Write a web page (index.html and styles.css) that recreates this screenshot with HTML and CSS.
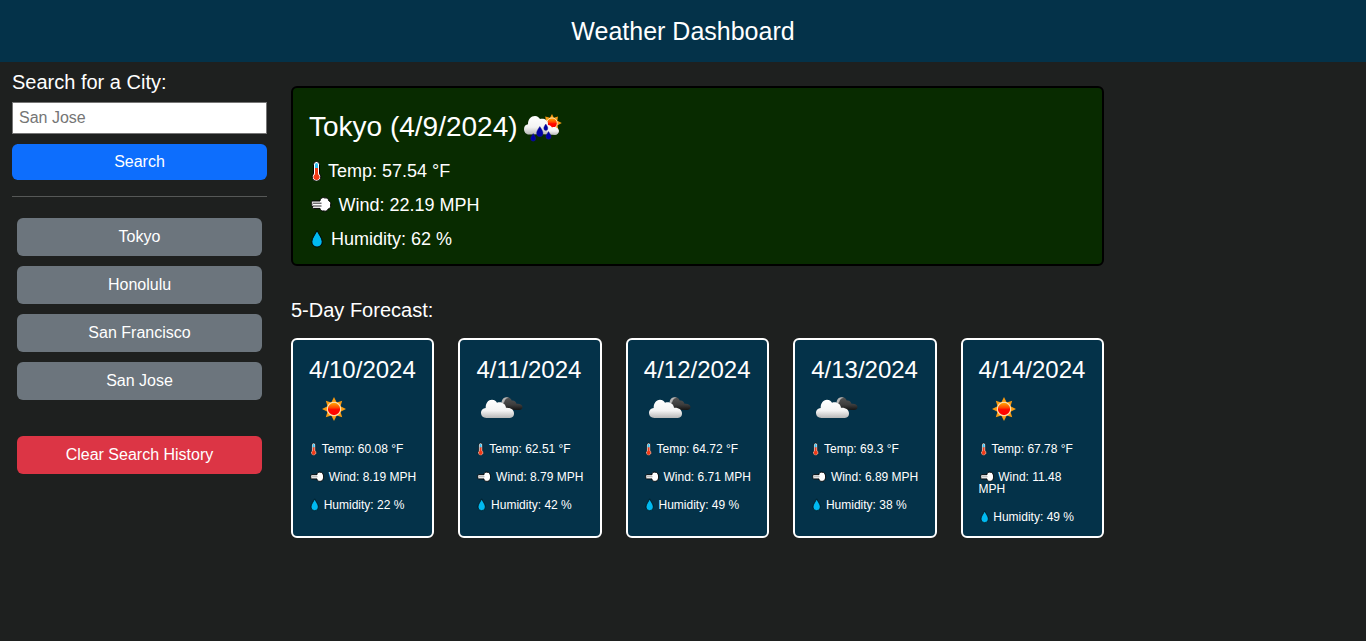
FILE: index.html
```html
<!DOCTYPE html>
<html lang="en">
<head>
<meta charset="utf-8">
<title>Weather Dashboard</title>
<link rel="stylesheet" href="styles.css">
</head>
<body>
<svg class="defs" aria-hidden="true">
  <defs>
    <linearGradient id="g-sun" x1="0" y1="0" x2="0" y2="1"><stop offset="0" stop-color="#ffb000"/><stop offset=".4" stop-color="#ff4a00"/><stop offset=".55" stop-color="#ff0800"/><stop offset="1" stop-color="#ff0000"/></linearGradient>
    <linearGradient id="g-cloud" x1="0" y1="0" x2="0" y2="1"><stop offset="0" stop-color="#ffffff"/><stop offset=".6" stop-color="#f3f3f3"/><stop offset="1" stop-color="#b8b8b8"/></linearGradient>
    <linearGradient id="g-dark" x1="0" y1="0" x2="0" y2="1"><stop offset="0" stop-color="#555"/><stop offset=".6" stop-color="#3c3c3c"/><stop offset="1" stop-color="#141414"/></linearGradient>
    <symbol id="sun" viewBox="0 0 24 24">
      <path d="M12 0l2.700 5.500 5.500-1.700-1.700 5.500L24 12l-5.500 2.700 1.700 5.500-5.500-1.700L12 24l-2.700-5.500-5.500 1.700 1.700-5.500L0 12l5.500-2.700-1.700-5.500 5.500 1.700z" fill="#f79a12"/>
      <circle cx="12" cy="12" r="6.700" fill="url(#g-sun)" stroke="#ffe3b2" stroke-width="1.1"/>
    </symbol>
    <symbol id="clouds" viewBox="0 0 42 22">
      <path d="M21 12.500V4.500C21.500 1.500 24 0 26.500.3c2.300.2 3.500 1.600 4.200 3.300 2.300-.6 4.300.7 4.800 3.200 3.500-.4 6 .9 6 3.200 0 2-1.500 3-3.500 3z" fill="url(#g-dark)"/>
      <path d="M20.500 6.500C20.500 3 22.500.2 25.500.2c1 0 1.800.3 2.400.8-2.400-.3-4.400 1.700-4.800 4.500z" fill="#b5b5b5"/>
      <path d="M5.500 21C2 21 0 18.800 0 15.800c0-2.500 2-4.700 4.700-4.800C4.500 6.500 7 2.800 11 2.800c2.200 0 4 1.200 5 3 4.500-1.500 8.500 1 9 5 5-.3 8 2.200 8 5.700S30.500 21 28 21z" fill="url(#g-cloud)"/>
    </symbol>
    <symbol id="rain" viewBox="0 0 38 28">
      <path d="M28 0l1.800 3.700 4.200-1.200-.7 4.300 4.500 2.200-4.200 2.300.6 4.200-4.500-1L28 18l-2-4-5 1 1-5-4-1 4-2-.8-4.500 4.800 1.200z" fill="#f79a12"/>
      <circle cx="28" cy="9.200" r="5.300" fill="url(#g-sun)" stroke="#ffe3b2"/>
      <path d="M17 20c2-6 3-9 7-9 2 0 3 1 4 2.500 3-1.500 7 .5 7 3.500 0 2-2 4-4 4z" fill="url(#g-cloud)"/>
      <path d="M5 20.500C2 20.500 0 18 0 15s2-4.600 4-4.800C4 5 7 2 11 2c2.500 0 4 1.500 5 3 4-1 8 1 8 5l-1 10z" fill="url(#g-cloud)"/>
      <g fill="#0000a6" stroke="#20207c" stroke-width=".4">
        <path d="M9.200 19.500c1.500 2.500 2.500 3.600 2.500 5a2.500 2.700 0 0 1-5 0c0-1.400 1-2.500 2.500-5z"/>
        <path d="M15.800 12.500c2 3 3.200 4.800 3.200 6.700a3.200 3.500 0 0 1-6.400 0c0-1.900 1.200-3.700 3.200-6.700z"/>
        <path d="M21.800 10c1.300 2 2 3 2 4.200a2 2.300 0 0 1-4 0c0-1.200.7-2.200 2-4.200z"/>
        <path d="M24.500 17.500c1.600 2.500 2.600 3.600 2.600 5a2.600 2.800 0 0 1-5.200 0c0-1.400 1-2.500 2.600-5z"/>
      </g>
    </symbol>
    <symbol id="temp" viewBox="0 0 16 20">
      <path d="M7.500.5a3 3 0 0 0-3 3v9.300a4.300 4.300 0 1 0 6 0V3.500a3 3 0 0 0-3-3z" fill="#fff" stroke="#000"/>
      <path d="M7.500 2A1.500 1.500 0 0 0 6 3.500V8h3V3.500A1.500 1.500 0 0 0 7.500 2z" fill="#32bdf0"/>
      <path d="M6 7h3v6.300a3.100 3.100 0 1 1-3 0z" fill="#f03a17"/>
    </symbol>
    <symbol id="wind" viewBox="0 0 24 20">
      <path d="M3.500 6H11C11 3.300 14 1.800 15.700 3c2-.6 3.800.8 4 2.700 1.800.8 2.500 2.600 1.900 4.300.4 2-.8 3.700-2.500 4.100-.8 1.900-2.600 2.600-4.200 1.800-2 .5-3.600-.8-3.900-2.500H4.500c-1.100 0-1.300-1.300-.6-1.900-1.300 0-1.700-1.200-1-2-.9-.6-.5-3.500.6-3.500z" fill="#fff" stroke="#000"/>
      <path d="M3.500 8.200h9M3.500 11h9" stroke="#111" stroke-width=".9"/>
    </symbol>
    <symbol id="wind-small" viewBox="0 0 17 14">
      <path d="M2.500 4.700H8C8 2.500 9.700 1.700 11 2.200c2-.3 3.800 1.900 3.600 4.900 0 3-2 4.700-4.100 4.200-1.500 0-2.500-1-2.500-2.400H2.500c-1 0-1-4.200 0-4.200z" fill="#fff" stroke="#000" stroke-width=".9"/>
      <path d="M3 6.700h5.500" stroke="#b8b8b8" stroke-width="1.300"/>
    </symbol>
    <symbol id="drop" viewBox="0 0 18 20">
      <path d="M8.500.8C7 4.800 3 8.800 3 13a5.500 5.500 0 0 0 11 0C14 8.800 10 4.800 8.500.8z" fill="#00b9f1" stroke="#000"/>
    </symbol>
  </defs>
</svg>

<header class="header"><h1>Weather Dashboard</h1></header>

<main class="layout">
  <aside class="sidebar">
    <label class="label" for="city">Search for a City:</label>
    <input class="input" id="city" type="text" placeholder="San Jose">
    <button class="btn btn-search">Search</button>
    <div class="history">
      <button class="btn">Tokyo</button>
      <button class="btn">Honolulu</button>
      <button class="btn">San Francisco</button>
      <button class="btn">San Jose</button>
      <button class="btn btn-clear">Clear Search History</button>
    </div>
  </aside>

  <div class="content">
    <section class="today">
      <h2>Tokyo (4/9/2024)<svg class="rain"><use href="#rain"/></svg></h2>
      <p><svg class="temp"><use href="#temp"/></svg>Temp: 57.54 °F</p>
      <p><svg class="wind"><use href="#wind"/></svg>Wind: 22.19 MPH</p>
      <p><svg class="drop"><use href="#drop"/></svg>Humidity: 62 %</p>
    </section>

    <h3 class="forecast-title">5-Day Forecast:</h3>
    <section class="forecast">
      <article class="day">
        <h4>4/10/2024</h4>
        <svg class="sun"><use href="#sun"/></svg>
        <p><svg class="temp"><use href="#temp"/></svg>Temp: 60.08 °F</p>
        <p><svg class="wind"><use href="#wind-small"/></svg>Wind: 8.19 MPH</p>
        <p><svg class="drop"><use href="#drop"/></svg>Humidity: 22 %</p>
      </article>
      <article class="day">
        <h4>4/11/2024</h4>
        <svg class="clouds"><use href="#clouds"/></svg>
        <p><svg class="temp"><use href="#temp"/></svg>Temp: 62.51 °F</p>
        <p><svg class="wind"><use href="#wind-small"/></svg>Wind: 8.79 MPH</p>
        <p><svg class="drop"><use href="#drop"/></svg>Humidity: 42 %</p>
      </article>
      <article class="day">
        <h4>4/12/2024</h4>
        <svg class="clouds"><use href="#clouds"/></svg>
        <p><svg class="temp"><use href="#temp"/></svg>Temp: 64.72 °F</p>
        <p><svg class="wind"><use href="#wind-small"/></svg>Wind: 6.71 MPH</p>
        <p><svg class="drop"><use href="#drop"/></svg>Humidity: 49 %</p>
      </article>
      <article class="day">
        <h4>4/13/2024</h4>
        <svg class="clouds"><use href="#clouds"/></svg>
        <p><svg class="temp"><use href="#temp"/></svg>Temp: 69.3 °F</p>
        <p><svg class="wind"><use href="#wind-small"/></svg>Wind: 6.89 MPH</p>
        <p><svg class="drop"><use href="#drop"/></svg>Humidity: 38 %</p>
      </article>
      <article class="day">
        <h4>4/14/2024</h4>
        <svg class="sun"><use href="#sun"/></svg>
        <p><svg class="temp"><use href="#temp"/></svg>Temp: 67.78 °F</p>
        <p><svg class="wind"><use href="#wind-small"/></svg>Wind: 11.48 MPH</p>
        <p><svg class="drop"><use href="#drop"/></svg>Humidity: 49 %</p>
      </article>
    </section>
  </div>
</main>
</body>
</html>
```
FILE: styles.css
```css
* { box-sizing: border-box; }
body {
  margin: 0;
  min-height: 100vh;
  background: #1e201f;
  color: #fff;
  font-family: "Liberation Sans", Arial, sans-serif;
}
h1, h2, h3, h4, p { margin: 0; font-weight: 400; }
.defs { position: absolute; width: 0; height: 0; }

.header {
  height: 62px;
  background: #043249;
  text-align: center;
}
.header h1 { font-size: 25px; line-height: 62px; }

.layout { display: flex; gap: 24px; padding-left: 12px; }

.sidebar { width: 255px; padding-top: 8px; }
.label { display: block; font-size: 20px; line-height: 24px; }
.input {
  display: block;
  width: 100%;
  height: 32px;
  margin: 8px 0 10px;
  padding: 0 6px;
  border: 1px solid #767676;
  background: #fff;
  font: 16px "Liberation Sans", Arial, sans-serif;
}
.input::placeholder { color: #757575; }
.btn {
  display: block;
  width: 100%;
  height: 38px;
  padding: 0;
  border: 0;
  border-radius: 6px;
  background: #6c757d;
  color: #fff;
  font: 16px "Liberation Sans", Arial, sans-serif;
}
.btn-search { height: 36px; background: #0d6efd; }
.btn-clear { margin-top: 26px; background: #dc3545; }
.history {
  display: flex;
  flex-direction: column;
  gap: 10px;
  margin-top: 16px;
  padding: 21px 5px 0;
  border-top: 1px solid #565857;
}

.content { width: 813px; padding-top: 24px; }
.today {
  height: 180px;
  padding: 21px 16px 0;
  border: 2px solid #000;
  border-radius: 6px;
  background: #082b00;
}
.today h2 { display: flex; height: 36px; font-size: 28px; line-height: 36px; white-space: nowrap; }
.today p { font-size: 18px; line-height: 18px; margin-bottom: 16px; }
.today h2 + p { margin-top: 17px; }
.rain { width: 38px; height: 28px; margin: 5px 0 0 6px; }
.temp, .wind, .drop { vertical-align: baseline; margin: -4px 0 -4px; height: 20px; }
.temp { width: 16px; margin-right: 3px; }
.wind { width: 24px; margin-right: 5.500px; }
.drop { width: 17px; margin-right: 5px; }

.forecast-title { margin-top: 32px; font-size: 20px; line-height: 24px; }
.forecast { display: grid; grid-template-columns: repeat(5, minmax(0, 1fr)); gap: 24px; margin-top: 16px; }
.day {
  height: 200px;
  padding: 16px 16px 0;
  border: 2px solid #fff;
  border-radius: 6px;
  background: #043249;
}
.day h4 { font-size: 24px; line-height: 28px; white-space: nowrap; }
.day p { font-size: 12px; line-height: 12px; margin-bottom: 16px; }
.day .sun { display: block; width: 24px; height: 24px; margin: 13px 0 22px 13px; }
.day .clouds { display: block; width: 42px; height: 22px; margin: 13px 0 24px 5px; }
.day .temp, .day .wind, .day .drop { height: 14px; margin-top: -4px; margin-bottom: -3px; }
.day .temp { width: 10px; margin-right: 2.800px; }
.day .wind { width: 17px; margin-right: 2.700px; }
.day .drop { width: 12px; margin-right: 2.700px; }
```
